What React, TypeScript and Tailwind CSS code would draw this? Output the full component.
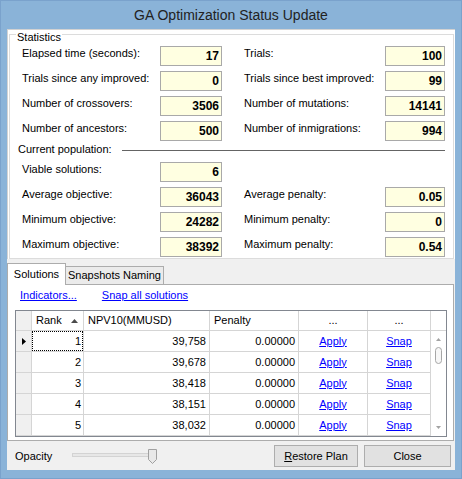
import React from "react";

type StatProps = { label: string; value: string; left?: boolean };

function Stat({ label, value, left }: StatProps) {
  return (
    <div className="flex h-[20px] items-start">
      <span className="flex-1 whitespace-nowrap text-[11px] leading-[15px]">{label}</span>
      <span
        className={
          left
            ? "flex h-[20px] w-[62px] items-center justify-end border border-[#a9a9a9] bg-[#ffffe1] pr-[2px] text-[12px] font-bold leading-none"
            : "flex h-[20px] w-[60px] items-center justify-end border border-[#a9a9a9] bg-[#ffffe1] pr-[2px] text-[12px] font-bold leading-none"
        }
      >
        {value}
      </span>
    </div>
  );
}

const rows = [
  { rank: "1", npv: "39,758", pen: "0.00000" },
  { rank: "2", npv: "39,678", pen: "0.00000" },
  { rank: "3", npv: "38,418", pen: "0.00000" },
  { rank: "4", npv: "38,151", pen: "0.00000" },
  { rank: "5", npv: "38,032", pen: "0.00000" },
];

function SolutionsGrid() {
  return (
    <div className="mt-[8px] border border-[#828790] text-[11px] leading-[13px]">
      {/* header */}
      <div className="flex h-[20px] border-b border-[#d5d5d5]">
        <div className="w-[16px] border-r border-[#d5d5d5] bg-[#f0f0f0]" />
        <div className="flex w-[52px] items-center justify-between border-r border-[#d5d5d5] pl-[4px] pr-[5px]">
          <span>Rank</span>
          <svg width="7" height="4" viewBox="0 0 7 4">
            <polygon points="3.5,0 7,4 0,4" fill="#4a4a4a" />
          </svg>
        </div>
        <div className="flex w-[126px] items-center border-r border-[#d5d5d5] pl-[4px]">NPV10(MMUSD)</div>
        <div className="flex w-[89px] items-center border-r border-[#d5d5d5] pl-[4px]">Penalty</div>
        <div className="flex w-[69px] items-center justify-center border-r border-[#d5d5d5]">...</div>
        <div className="flex w-[63px] items-center justify-center border-r border-[#d5d5d5]">...</div>
        <div className="flex-1" />
      </div>
      {/* body */}
      <div className="flex">
        <div className="flex w-[415px] flex-col">
          {rows.map((r, i) => (
            <div key={r.rank} className="flex h-[21px] border-b border-[#d5d5d5]">
              <div className="flex w-[16px] items-center border-r border-[#d5d5d5] bg-[#f0f0f0] pl-[6px]">
                {i === 0 && (
                  <svg width="4" height="7" viewBox="0 0 4 7">
                    <polygon points="0,0 4,3.5 0,7" fill="#000" />
                  </svg>
                )}
              </div>
              <div className="w-[52px] border-r border-[#d5d5d5]">
                {i === 0 ? (
                  <div className="flex h-full items-center justify-end border border-dotted border-black pr-[1px]">
                    {r.rank}
                  </div>
                ) : (
                  <div className="flex h-full items-center justify-end pr-[2px]">{r.rank}</div>
                )}
              </div>
              <div className="flex w-[126px] items-center justify-end border-r border-[#d5d5d5] pr-[3px]">{r.npv}</div>
              <div className="flex w-[89px] items-center justify-end border-r border-[#d5d5d5] pr-[3px]">{r.pen}</div>
              <div className="flex w-[69px] items-center justify-center border-r border-[#d5d5d5]">
                <span className="text-[#0000ff] underline">Apply</span>
              </div>
              <div className="flex w-[63px] items-center justify-center border-r border-[#d5d5d5]">
                <span className="text-[#0000ff] underline">Snap</span>
              </div>
            </div>
          ))}
        </div>
        {/* vertical scrollbar */}
        <div className="flex flex-1 flex-col items-center pb-[7px] pt-[7px]">
          <svg width="5" height="3" viewBox="0 0 5 3">
            <polygon points="2.5,0 5,3 0,3" fill="#a3a3a3" />
          </svg>
          <div className="mt-[6px] h-[17px] w-[7px] rounded-full border border-[#a6a6a6] bg-[#f7f7f7]" />
          <div className="flex-1" />
          <svg width="5" height="3" viewBox="0 0 5 3">
            <polygon points="0,0 5,0 2.5,3" fill="#a3a3a3" />
          </svg>
        </div>
      </div>
    </div>
  );
}

export default function App() {
  return (
    <div className="flex h-[479px] w-[462px] flex-col border border-[#7aa2cc] bg-[#8ab3d8] font-['Liberation_Sans',Arial,sans-serif] text-black">
      <div className="flex h-[28px] items-center justify-center text-[14px] text-[#222222]">
        GA Optimization Status Update
      </div>

      <div className="mx-[6px] mb-[8px] flex flex-1 flex-col bg-[#f0f0f0]">
        {/* Statistics group */}
        <div className="border-l border-t border-[#d2d2d2] bg-white px-[1px] pt-[4px]">
          <div className="flex flex-col border border-[#dcdcdc] pb-[1px] pl-[12px] pr-[8px]">
            <div className="-ml-[6px] -mt-[4px] w-fit bg-white px-[1px] text-[11px] leading-[13px]">Statistics</div>

            <div className="mt-[2px] grid grid-cols-[200px_201px] gap-x-[22px] gap-y-[5px]">
              <Stat left label="Elapsed time (seconds):" value="17" />
              <Stat label="Trials:" value="100" />
              <Stat left label="Trials since any improved:" value="0" />
              <Stat label="Trials since best improved:" value="99" />
              <Stat left label="Number of crossovers:" value="3506" />
              <Stat label="Number of mutations:" value="14141" />
              <Stat left label="Number of ancestors:" value="500" />
              <Stat label="Number of inmigrations:" value="994" />
            </div>

            <div className="-ml-[4px] mt-[1px] flex h-[14px] items-start gap-[10px]">
              <span className="text-[11px] leading-[14px]">Current population:</span>
              <div className="mt-[8px] h-px flex-1 bg-[#646464]" />
            </div>

            <div className="mt-[6px] grid grid-cols-[200px_201px] gap-x-[22px] gap-y-[5px]">
              <Stat left label="Viable solutions:" value="6" />
              <div />
              <Stat left label="Average objective:" value="36043" />
              <Stat label="Average penalty:" value="0.05" />
              <Stat left label="Minimum objective:" value="24282" />
              <Stat label="Minimum penalty:" value="0" />
              <Stat left label="Maximum objective:" value="38392" />
              <Stat label="Maximum penalty:" value="0.54" />
            </div>
          </div>
        </div>

        {/* Tabs */}
        <div className="flex h-[25px] items-end">
          <div className="relative z-10 -mb-px flex h-[22px] w-[59px] items-center justify-center border-x border-t border-[#acacac] bg-white text-[11px]">
            Solutions
          </div>
          <div className="flex h-[18px] w-[98px] items-center justify-center border-r border-t border-[#acacac] bg-[#ebebeb] text-[11px]">
            Snapshots Naming
          </div>
        </div>

        <div className="mr-[1px] border border-[#acacac] bg-white pb-[3px] pl-[7px] pr-[6px] pt-[4px]">
          <div className="flex gap-[25px] pl-[5px] text-[11px] leading-[13px]">
            <span className="text-[#0000ff] underline">Indicators...</span>
            <span className="text-[#0000ff] underline">Snap all solutions</span>
          </div>
          <SolutionsGrid />
        </div>

        {/* Bottom bar */}
        <div className="flex flex-1 items-center pl-[8px] pr-[4px] pt-[1px]">
          <span className="w-[57px] text-[11px] leading-[13px]">Opacity</span>
          <svg width="86" height="16" viewBox="0 0 86 16">
            <rect x="0.5" y="5.5" width="79" height="3" fill="#e7e7e7" stroke="#d3d3d3" />
            <path d="M76.5 1.5 H84.5 V11.5 L80.5 15.5 L76.5 11.5 Z" fill="#e8e8e8" stroke="#a0a0a0" />
          </svg>
          <div className="ml-auto flex gap-[6px]">
            <button className="h-[22px] w-[84px] border border-[#adadad] bg-[#e1e1e1] text-[11px]">
              <span className="underline">R</span>estore Plan
            </button>
            <button className="h-[22px] w-[87px] border border-[#adadad] bg-[#e1e1e1] text-[11px]">Close</button>
          </div>
        </div>
      </div>
    </div>
  );
}
